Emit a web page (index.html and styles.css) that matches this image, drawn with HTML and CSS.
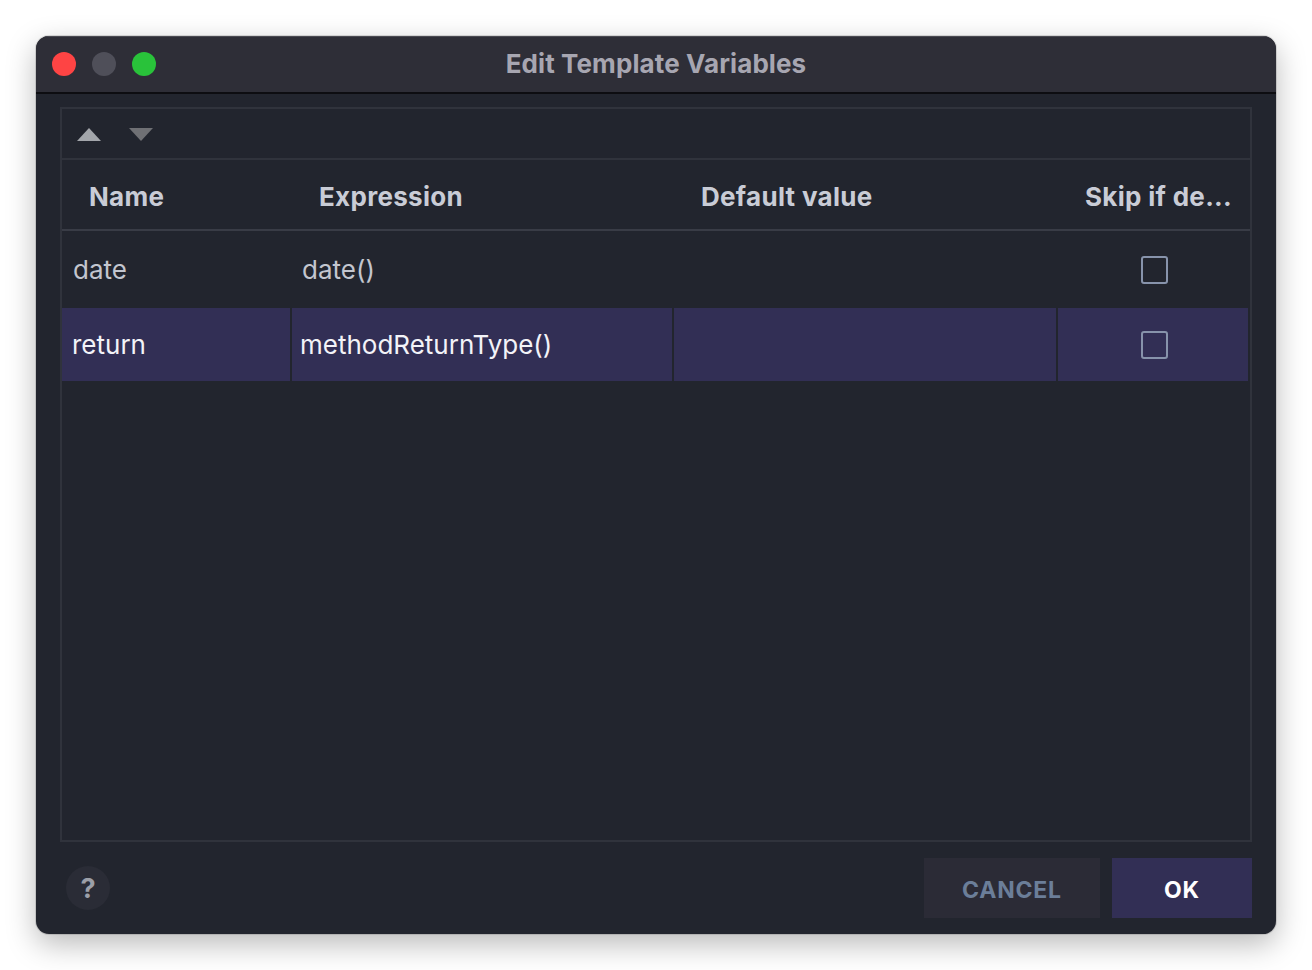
FILE: index.html
```html
<!DOCTYPE html>
<html>
<head>
<meta charset="utf-8">
<link rel="stylesheet" href="styles.css">
</head>
<body>
<div class="window">
  <div class="titlebar">
    <div class="lights">
      <span class="light red"></span>
      <span class="light gray"></span>
      <span class="light green"></span>
    </div>
    <div class="title">Edit Template Variables</div>
  </div>
  <div class="content">
    <div class="panel">
      <div class="toolbar">
        <svg class="arrow" width="24" height="13" viewBox="0 0 24 13"><polygon points="0,13 12,0 24,13" fill="#a3a6ab"/></svg>
        <svg class="arrow" width="24" height="13" viewBox="0 0 24 13"><polygon points="0,0 24,0 12,13" fill="#6f7074"/></svg>
      </div>
      <div class="table">
        <div class="row head">
          <div class="cell c1">Name</div>
          <div class="cell c2">Expression</div>
          <div class="cell c3">Default value</div>
          <div class="cell c4">Skip if de...</div>
        </div>
        <div class="row data">
          <div class="cell c1">date</div>
          <div class="cell c2">date()</div>
          <div class="cell c3"></div>
          <div class="cell c4"><span class="check"></span></div>
        </div>
        <div class="row data selected">
          <div class="cell c1">return</div>
          <div class="cell c2">methodReturnType()</div>
          <div class="cell c3"></div>
          <div class="cell c4"><span class="check"></span></div>
        </div>
      </div>
    </div>
    <div class="footer">
      <div class="help">?</div>
      <div class="buttons">
        <button class="btn cancel">CANCEL</button>
        <button class="btn ok">OK</button>
      </div>
    </div>
  </div>
</div>
</body>
</html>
```

FILE: styles.css
```css
html, body {
  margin: 0;
  padding: 0;
  background: #ffffff;
}
body {
  padding: 36px;
  font-family: Inter, "Noto Sans", "Liberation Sans", sans-serif;
}
.window {
  width: 1240px;
  height: 898px;
  border-radius: 13px;
  overflow: hidden;
  background: #22252e;
  box-shadow: 0 10px 30px rgba(0,0,0,0.28), 0 0 0 1px rgba(0,0,0,0.12);
  display: flex;
  flex-direction: column;
}
.titlebar {
  flex: none;
  background: #2e2e37;
  border-top: 1px solid #4a4a52;
  border-bottom: 2px solid #0d0d11;
  box-sizing: border-box;
  height: 58px;
  position: relative;
  display: flex;
  align-items: center;
  justify-content: center;
}
.lights {
  position: absolute;
  left: 16px;
  top: 15px;
  display: flex;
  gap: 16px;
}
.light {
  width: 24px;
  height: 24px;
  border-radius: 50%;
  display: block;
}
.red { background: #fe4444; }
.gray { background: #4f4f59; }
.green { background: #29c23a; }
.title {
  color: #a7a6b1;
  font-size: 26px;
  font-weight: 700;
  letter-spacing: 0.1px;
  margin-top: -3px;
}
.content {
  flex: 1;
  display: flex;
  flex-direction: column;
  padding: 13px 24px 16px 24px;
}
.panel {
  flex: 1;
  border: 2px solid #30333c;
  display: flex;
  flex-direction: column;
}
.toolbar {
  height: 49px;
  border-bottom: 2px solid #30333c;
  display: flex;
  align-items: center;
  gap: 28px;
  padding-left: 15px;
}
.arrow { display: block; margin-top: 1px; }
.row {
  display: grid;
  grid-template-columns: 228px 380px 382px 190px;
  column-gap: 2px;
}
.head {
  height: 69px;
  border-bottom: 2px solid #393c46;
}
.head .cell {
  color: #c9ccd6;
  font-weight: 700;
  font-size: 26px;
  letter-spacing: 0.3px;
  padding-left: 27px;
  display: flex;
  align-items: center;
  padding-top: 4px;
  box-sizing: border-box;
  white-space: nowrap;
}
.data {
  height: 77px;
}
.data + .data { height: 73px; }
.data .cell {
  color: #c3c6cf;
  font-size: 26px;
  display: flex;
  align-items: center;
  white-space: nowrap;
}
.data .c1 { padding-left: 11px; }
.data .c2 { padding-left: 10px; }
.data .c4 { justify-content: center; }
.selected {
  background: #22252e;
}
.selected .cell {
  background: #322f55;
  color: #f3f3f8;
}
.selected .c1 { padding-left: 10px; }
.selected .c2 { padding-left: 8px; }
.check {
  display: block;
  width: 23px;
  height: 24px;
  border: 2px solid #8793ab;
  border-radius: 3px;
  margin-left: 2px;
}
.footer {
  height: 76px;
  flex: none;
  display: flex;
  align-items: flex-end;
  justify-content: space-between;
}
.help {
  width: 44px;
  height: 44px;
  border-radius: 50%;
  background: #2a2c36;
  color: #9c9fa8;
  font-weight: 700;
  font-size: 27px;
  display: flex;
  align-items: center;
  justify-content: center;
  margin-left: 6px;
  margin-bottom: 8px;
}
.buttons {
  display: flex;
  gap: 12px;
}
.btn {
  height: 60px;
  border: none;
  font-family: Inter, "Noto Sans", "Liberation Sans", sans-serif;
  font-weight: 700;
  font-size: 23px;
  letter-spacing: 0.8px;
  padding: 0;
  padding-top: 3px;
}
.cancel {
  width: 176px;
  background: #2b2b36;
  color: #6b7e99;
}
.ok {
  width: 140px;
  background: #322f55;
  color: #ffffff;
}
```
